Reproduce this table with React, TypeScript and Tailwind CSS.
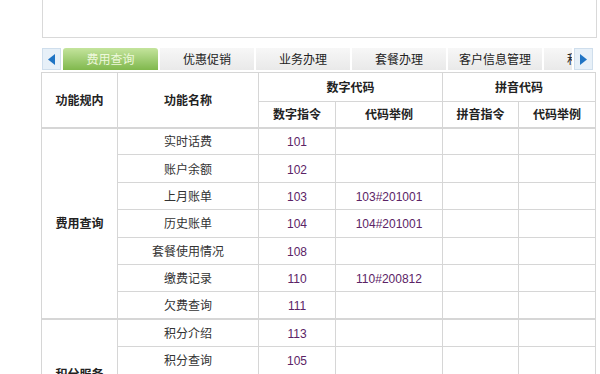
import React from 'react';

const tabs = ['费用查询', '优惠促销', '业务办理', '套餐办理', '客户信息管理', '积分服务'];

type Row = { name: string; code: string; example?: string };

const groups: { title: string; rows: Row[] }[] = [
  {
    title: '费用查询',
    rows: [
      { name: '实时话费', code: '101' },
      { name: '账户余额', code: '102' },
      { name: '上月账单', code: '103', example: '103#201001' },
      { name: '历史账单', code: '104', example: '104#201001' },
      { name: '套餐使用情况', code: '108' },
      { name: '缴费记录', code: '110', example: '110#200812' },
      { name: '欠费查询', code: '111' },
    ],
  },
  {
    title: '积分服务',
    rows: [
      { name: '积分介绍', code: '113' },
      { name: '积分查询', code: '105' },
      { name: '积分兑换', code: '106' },
      { name: '积分明细', code: '107' },
    ],
  },
];

const cjk = '[font-family:"Noto_Sans_CJK_SC","Liberation_Sans",sans-serif]';

function Arrow({ dir }: { dir: 'left' | 'right' }) {
  return (
    <div className="flex h-[22px] w-[19px] shrink-0 items-center justify-center border border-[#cfdeec] bg-[#e7f0f8]">
      <svg width="7" height="11" viewBox="0 0 7 11">
        {dir === 'left' ? (
          <polygon points="7,0 0,5.5 7,11" fill="#1f74c4" />
        ) : (
          <polygon points="0,0 7,5.5 0,11" fill="#1f74c4" />
        )}
      </svg>
    </div>
  );
}

export default function App() {
  return (
    <div className={`w-[600px] bg-white text-[12px] text-[#222] ${cjk}`}>
      <div className="ml-[42px] h-[38px] w-[555px] border border-t-0 border-[#d9d9d9]" />

      <div className="mt-[10px] ml-[42px] flex h-[22px] w-[551px] items-stretch">
        <Arrow dir="left" />
        <div className="ml-[2px] mr-[2px] flex min-w-0 flex-1 gap-[2px] overflow-hidden">
          {tabs.map((t, i) => (
            <div
              key={t}
              className={
                i === 0
                  ? 'flex w-[95px] shrink-0 items-center justify-center rounded-t-[3px] bg-gradient-to-b from-[#c4e49c] to-[#80b84c] text-[#eef8dc]'
                  : 'flex w-[94px] shrink-0 items-center justify-center bg-gradient-to-b from-[#f7f7f7] to-[#e9e9e9] text-[#222]'
              }
            >
              {t}
            </div>
          ))}
        </div>
        <Arrow dir="right" />
      </div>

      <table className="mt-[2px] ml-[41px] w-[554px] table-fixed border-collapse border border-[#d6d6d6]">
        <colgroup>
          <col className="w-[76px]" />
          <col className="w-[141px]" />
          <col className="w-[77px]" />
          <col className="w-[107px]" />
          <col className="w-[76px]" />
          <col className="w-[77px]" />
        </colgroup>
        <thead className="font-bold">
          <tr className="h-[29px]">
            <th rowSpan={2} className="border-b-2 border-r border-[#d6d6d6] p-0">功能规内</th>
            <th rowSpan={2} className="border-b-2 border-r border-[#d6d6d6] p-0">功能名称</th>
            <th colSpan={2} className="border-r border-b border-[#d6d6d6] p-0">数字代码</th>
            <th colSpan={2} className="border-b border-[#d6d6d6] p-0">拼音代码</th>
          </tr>
          <tr className="h-[26px]">
            <th className="border-r border-b-2 border-[#d6d6d6] p-0">数字指令</th>
            <th className="border-r border-b-2 border-[#d6d6d6] p-0">代码举例</th>
            <th className="border-r border-b-2 border-[#d6d6d6] p-0">拼音指令</th>
            <th className="border-b-2 border-[#d6d6d6] p-0">代码举例</th>
          </tr>
        </thead>
        <tbody>
          {groups.map((g) =>
            g.rows.map((r, i) => {
              const last = i === g.rows.length - 1;
              const bb = last ? 'border-b-2' : 'border-b';
              return (
                <tr key={g.title + r.name} className="h-[27.4px]">
                  {i === 0 && (
                    <td rowSpan={g.rows.length} className="border-r border-b-2 border-[#d6d6d6] p-0 text-center font-bold">
                      {g.title}
                    </td>
                  )}
                  <td className={`${bb} border-r border-[#d6d6d6] p-0 text-center text-[#333]`}>{r.name}</td>
                  <td className={`${bb} border-r border-[#d6d6d6] p-0 pt-[2px] text-center text-[12px] text-[#5b2366] [font-family:"Liberation_Sans",sans-serif]`}>
                    {r.code}
                  </td>
                  <td className={`${bb} border-r border-[#d6d6d6] p-0 pt-[2px] text-center text-[12px] text-[#5b2366] [font-family:"Liberation_Sans",sans-serif]`}>
                    {r.example ?? ''}
                  </td>
                  <td className={`${bb} border-r border-[#d6d6d6] p-0`} />
                  <td className={`${bb} border-[#d6d6d6] p-0`} />
                </tr>
              );
            })
          )}
        </tbody>
      </table>
    </div>
  );
}
